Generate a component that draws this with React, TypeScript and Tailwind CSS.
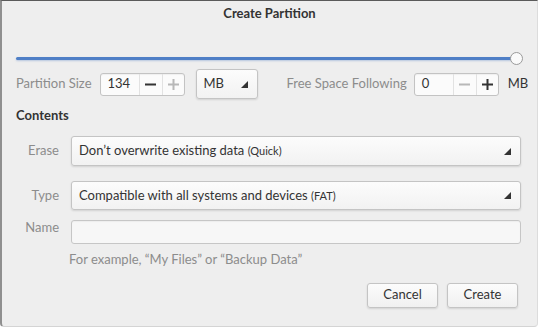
import React from 'react';

const font = { fontFamily: '"Lato", "Open Sans", sans-serif' };

const Corner: React.FC = () => (
  <svg width="7" height="7" viewBox="0 0 7 7" className="shrink-0">
    <polygon points="7,0 7,7 0,7" fill="#333" />
  </svg>
);

const Minus = ({ color }: { color: string }) => (
  <svg width="11" height="11" viewBox="0 0 11 11">
    <rect x="0" y="4.5" width="11" height="2" fill={color} />
  </svg>
);

const Plus = ({ color }: { color: string }) => (
  <svg width="11" height="11" viewBox="0 0 11 11">
    <rect x="0" y="4.5" width="11" height="2" fill={color} />
    <rect x="4.5" y="0" width="2" height="11" fill={color} />
  </svg>
);

const SpinBox = ({ value, minusOn, plusOn }: { value: string; minusOn: boolean; plusOn: boolean }) => (
  <div className="flex h-[23px] w-[85px] items-stretch rounded-[3px] border border-[#c3c3c3] bg-[#fbfbfb] shadow-[inset_0_1px_1px_rgba(0,0,0,0.05)]">
    <div className="flex w-[38px] items-center pl-[7px] text-[13px] text-[#333]">{value}</div>
    <div className="flex w-[23px] items-center justify-center border-l border-[#e2e2e2]">
      <Minus color={minusOn ? '#333' : '#b8b8b8'} />
    </div>
    <div className="flex flex-1 items-center justify-center border-l border-[#e2e2e2]">
      <Plus color={plusOn ? '#333' : '#b8b8b8'} />
    </div>
  </div>
);

const Combo = ({ children, className = '' }: { children: React.ReactNode; className?: string }) => (
  <div className={`flex items-center justify-between rounded-[3px] border border-[#c4c4c4] bg-gradient-to-b from-[#fcfcfc] to-[#f2f2f2] pl-[7px] pr-[9px] text-[13px] text-[#333] shadow-[0_1px_2px_rgba(0,0,0,0.12)] ${className}`}>
    <span>{children}</span>
    <Corner />
  </div>
);

const Button = ({ label }: { label: string }) => (
  <div className="flex h-[25px] w-[71px] items-center justify-center rounded-[3px] border border-[#c4c4c4] bg-gradient-to-b from-[#fcfcfc] to-[#f0f0f0] text-[13px] text-[#333] shadow-[0_1px_2px_rgba(0,0,0,0.12)]">
    {label}
  </div>
);

const App: React.FC = () => {
  return (
    <div style={font} className="h-[329px] w-[540px] overflow-hidden bg-white">
      <div className="flex h-[327px] w-[538px] flex-col rounded-b-[4px] border-t border-l-2 border-r border-b border-t-[#5a5a5a] border-l-[#8f8f8f] border-r-[#dcdcdc] border-b-[#d4d4d4] bg-[#eeeeee]">
        {/* Title */}
        <div className="pt-[4px] text-center text-[13px] font-bold leading-[16px] text-[#333]">Create Partition</div>

        {/* Slider */}
        <div className="mt-[31px] flex items-center pl-[14px] pr-[14px]">
          <div className="h-[3px] flex-1 rounded-full bg-[#4f7fc6] shadow-[0_1px_2px_rgba(79,127,198,0.35)]" />
          <div className="-ml-[3px] h-[13px] w-[13px] rounded-full border border-[#9a9a9a] bg-[#fafafa]" />
        </div>

        {/* Size row */}
        <div className="mt-[4px] flex h-[30px] items-center pl-[14px] text-[13px]">
          <span className="text-[#8c8c8c]">Partition Size</span>
          <div className="ml-[8px]">
            <SpinBox value="134" minusOn plusOn={false} />
          </div>
          <Combo className="ml-[11px] h-[30px] w-[62px]">MB</Combo>
          <span className="ml-[29px] text-[#8c8c8c]">Free Space Following</span>
          <div className="ml-[7px]">
            <SpinBox value="0" minusOn={false} plusOn />
          </div>
          <span className="ml-[9px] text-[#333]">MB</span>
        </div>

        {/* Contents */}
        <div className="mt-[8px] pl-[14px] text-[13px] font-bold leading-[16px] text-[#333]">Contents</div>

        <div className="mt-[13px] flex flex-col pl-[14px] pr-[16px] text-[13px]">
          <div className="flex items-center gap-[12px]">
            <span className="w-[43px] text-right text-[#8c8c8c]">Erase</span>
            <Combo className="h-[30px] flex-1">
              Don’t overwrite existing data <span className="text-[11px]">(Quick)</span>
            </Combo>
          </div>
          <div className="mt-[15px] flex items-center gap-[12px]">
            <span className="w-[43px] text-right text-[#8c8c8c]">Type</span>
            <Combo className="h-[29px] flex-1">
              Compatible with all systems and devices <span className="text-[11px]">(FAT)</span>
            </Combo>
          </div>
          <div className="mt-[10px] flex items-start gap-[12px]">
            <span className="w-[43px] text-right leading-[14px] text-[#8c8c8c]">Name</span>
            <div className="h-[24px] flex-1 rounded-[3px] border border-[#c6c6c6] bg-[#f7f7f7] shadow-[inset_0_1px_1px_rgba(0,0,0,0.04)]" />
          </div>
          <div className="mt-[6px] pl-[53px] text-[13px] text-[#8c8c8c]">For example, “My Files” or “Backup Data”</div>
          <div className="mt-[13px] flex justify-end gap-[9px] pr-[3px]">
            <Button label="Cancel" />
            <Button label="Create" />
          </div>
        </div>
      </div>
    </div>
  );
};

export default App;
